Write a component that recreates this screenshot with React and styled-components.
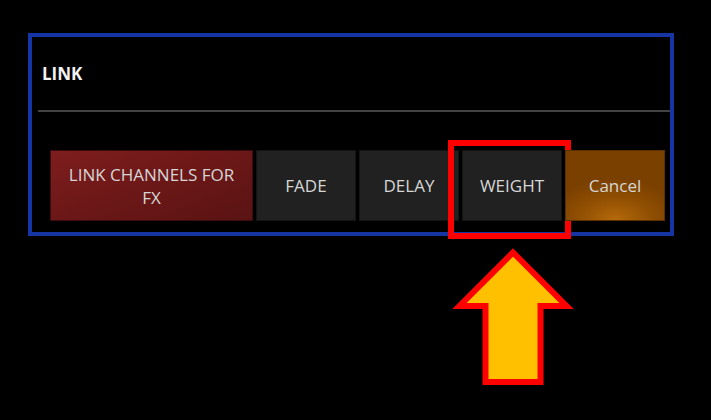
import React from "react";
import styled, { createGlobalStyle } from "styled-components";

const Global = createGlobalStyle`
  html, body { margin: 0; padding: 0; background: #000; }
  body { font-family: "Open Sans", "Noto Sans", sans-serif; }
`;

const Page = styled.div`
  position: relative;
  width: 711px;
  height: 420px;
  background: #000;
  padding: 33px 0 0 28px;
  box-sizing: border-box;
`;

const Dialog = styled.div`
  width: 646px;
  height: 203px;
  box-sizing: border-box;
  border: 4px solid #1435a3;
  display: flex;
  flex-direction: column;
`;

const Title = styled.div`
  padding: 25px 0 0 10px;
  height: 23px;
  font-size: 17px;
  line-height: 23px;
  font-weight: 700;
  color: #f2f2f2;
`;

const Separator = styled.div`
  margin: 25px 0 0 6px;
  height: 2px;
  background: #434343;
`;

const Row = styled.div`
  display: flex;
  gap: 3px;
  margin: 38px 0 0 18px;
`;

const Button = styled.div`
  position: relative;
  width: ${(p) => p.$w}px;
  height: 71px;
  box-sizing: border-box;
  border: 1px solid #141414;
  display: flex;
  align-items: center;
  justify-content: center;
  text-align: center;
  font-size: 17px;
  line-height: 23px;
  color: #d6d6d6;
  background: ${(p) =>
    p.$variant === "red"
      ? "linear-gradient(160deg, #7e1d1d 0%, #6a1717 55%, #5a1313 100%)"
      : p.$variant === "orange"
      ? "radial-gradient(ellipse 70% 60% at 50% 100%, #b66a0a 0%, #8f4e02 55%, #7a4000 100%), #8f4e02"
      : "#212121"};
  border-color: ${(p) =>
    p.$variant === "orange" ? "#5c3000" : p.$variant === "red" ? "#3c0c0c" : "#141414"};
`;

const Highlight = styled.div`
  position: absolute;
  left: -15px;
  top: -11px;
  right: -10px;
  bottom: -19px;
  border: 6px solid #ff0000;
  pointer-events: none;
`;

const Arrow = styled.svg`
  position: absolute;
  left: 440px;
  top: 240px;
  width: 150px;
  height: 155px;
  overflow: visible;
`;

export default function App() {
  return (
    <Page>
      <Global />
      <Dialog>
        <Title>LINK</Title>
        <Separator />
        <Row>
          <Button $w={203} $variant="red">
            LINK CHANNELS FOR
            <br />
            FX
          </Button>
          <Button $w={100}>FADE</Button>
          <Button $w={100}>DELAY</Button>
          <Button $w={100}>
            WEIGHT
            <Highlight />
          </Button>
          <Button $w={100} $variant="orange">
            Cancel
          </Button>
        </Row>
      </Dialog>
      <Arrow viewBox="440 240 150 155">
        <polygon
          points="513,252.5 566.5,306 540.5,306 540.5,382 485.5,382 485.5,306 459.5,306"
          fill="#ffc000"
          stroke="#ff0000"
          strokeWidth="6"
          strokeLinejoin="miter"
          strokeMiterlimit="10"
        />
      </Arrow>
    </Page>
  );
}
